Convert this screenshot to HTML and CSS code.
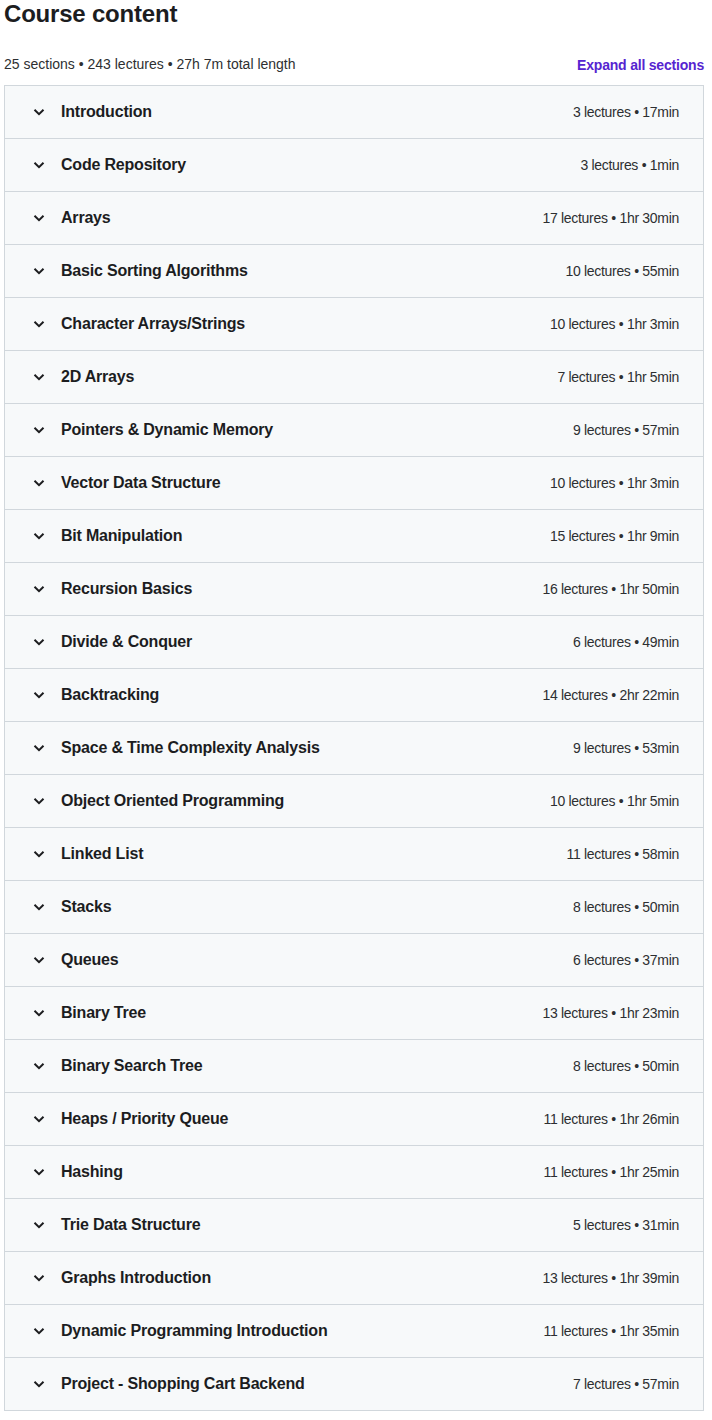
FILE: index.html
```html
<!DOCTYPE html>
<html lang="en">
<head>
    <meta charset="UTF-8">
    <title>Course content</title>
    <link rel="stylesheet" href="styles.css">
</head>
<body>
    <div class="curso">
        <h2>Course content</h2>
        <div class="resumen">
            <span>25 sections • 243 lectures • 27h 7m total length</span>
            <button class="expandir">Expand all sections</button>
        </div>

        <div class="secciones">
            <div class="seccion"><span class="flecha"><svg viewBox="0 0 12 8"><path d="M1.5 1.8 6 6.2 10.5 1.8"/></svg></span><span class="titulo">Introduction</span><span class="info">3 lectures • 17min</span></div>
            <div class="seccion"><span class="flecha"><svg viewBox="0 0 12 8"><path d="M1.5 1.8 6 6.2 10.5 1.8"/></svg></span><span class="titulo">Code Repository</span><span class="info">3 lectures • 1min</span></div>
            <div class="seccion"><span class="flecha"><svg viewBox="0 0 12 8"><path d="M1.5 1.8 6 6.2 10.5 1.8"/></svg></span><span class="titulo">Arrays</span><span class="info">17 lectures • 1hr 30min</span></div>
            <div class="seccion"><span class="flecha"><svg viewBox="0 0 12 8"><path d="M1.5 1.8 6 6.2 10.5 1.8"/></svg></span><span class="titulo">Basic Sorting Algorithms</span><span class="info">10 lectures • 55min</span></div>
            <div class="seccion"><span class="flecha"><svg viewBox="0 0 12 8"><path d="M1.5 1.8 6 6.2 10.5 1.8"/></svg></span><span class="titulo">Character Arrays/Strings</span><span class="info">10 lectures • 1hr 3min</span></div>
            <div class="seccion"><span class="flecha"><svg viewBox="0 0 12 8"><path d="M1.5 1.8 6 6.2 10.5 1.8"/></svg></span><span class="titulo">2D Arrays</span><span class="info">7 lectures • 1hr 5min</span></div>
            <div class="seccion"><span class="flecha"><svg viewBox="0 0 12 8"><path d="M1.5 1.8 6 6.2 10.5 1.8"/></svg></span><span class="titulo">Pointers &amp; Dynamic Memory</span><span class="info">9 lectures • 57min</span></div>
            <div class="seccion"><span class="flecha"><svg viewBox="0 0 12 8"><path d="M1.5 1.8 6 6.2 10.5 1.8"/></svg></span><span class="titulo">Vector Data Structure</span><span class="info">10 lectures • 1hr 3min</span></div>
            <div class="seccion"><span class="flecha"><svg viewBox="0 0 12 8"><path d="M1.5 1.8 6 6.2 10.5 1.8"/></svg></span><span class="titulo">Bit Manipulation</span><span class="info">15 lectures • 1hr 9min</span></div>
            <div class="seccion"><span class="flecha"><svg viewBox="0 0 12 8"><path d="M1.5 1.8 6 6.2 10.5 1.8"/></svg></span><span class="titulo">Recursion Basics</span><span class="info">16 lectures • 1hr 50min</span></div>
            <div class="seccion"><span class="flecha"><svg viewBox="0 0 12 8"><path d="M1.5 1.8 6 6.2 10.5 1.8"/></svg></span><span class="titulo">Divide &amp; Conquer</span><span class="info">6 lectures • 49min</span></div>
            <div class="seccion"><span class="flecha"><svg viewBox="0 0 12 8"><path d="M1.5 1.8 6 6.2 10.5 1.8"/></svg></span><span class="titulo">Backtracking</span><span class="info">14 lectures • 2hr 22min</span></div>
            <div class="seccion"><span class="flecha"><svg viewBox="0 0 12 8"><path d="M1.5 1.8 6 6.2 10.5 1.8"/></svg></span><span class="titulo">Space &amp; Time Complexity Analysis</span><span class="info">9 lectures • 53min</span></div>
            <div class="seccion"><span class="flecha"><svg viewBox="0 0 12 8"><path d="M1.5 1.8 6 6.2 10.5 1.8"/></svg></span><span class="titulo">Object Oriented Programming</span><span class="info">10 lectures • 1hr 5min</span></div>
            <div class="seccion"><span class="flecha"><svg viewBox="0 0 12 8"><path d="M1.5 1.8 6 6.2 10.5 1.8"/></svg></span><span class="titulo">Linked List</span><span class="info">11 lectures • 58min</span></div>
            <div class="seccion"><span class="flecha"><svg viewBox="0 0 12 8"><path d="M1.5 1.8 6 6.2 10.5 1.8"/></svg></span><span class="titulo">Stacks</span><span class="info">8 lectures • 50min</span></div>
            <div class="seccion"><span class="flecha"><svg viewBox="0 0 12 8"><path d="M1.5 1.8 6 6.2 10.5 1.8"/></svg></span><span class="titulo">Queues</span><span class="info">6 lectures • 37min</span></div>
            <div class="seccion"><span class="flecha"><svg viewBox="0 0 12 8"><path d="M1.5 1.8 6 6.2 10.5 1.8"/></svg></span><span class="titulo">Binary Tree</span><span class="info">13 lectures • 1hr 23min</span></div>
            <div class="seccion"><span class="flecha"><svg viewBox="0 0 12 8"><path d="M1.5 1.8 6 6.2 10.5 1.8"/></svg></span><span class="titulo">Binary Search Tree</span><span class="info">8 lectures • 50min</span></div>
            <div class="seccion"><span class="flecha"><svg viewBox="0 0 12 8"><path d="M1.5 1.8 6 6.2 10.5 1.8"/></svg></span><span class="titulo">Heaps / Priority Queue</span><span class="info">11 lectures • 1hr 26min</span></div>
            <div class="seccion"><span class="flecha"><svg viewBox="0 0 12 8"><path d="M1.5 1.8 6 6.2 10.5 1.8"/></svg></span><span class="titulo">Hashing</span><span class="info">11 lectures • 1hr 25min</span></div>
            <div class="seccion"><span class="flecha"><svg viewBox="0 0 12 8"><path d="M1.5 1.8 6 6.2 10.5 1.8"/></svg></span><span class="titulo">Trie Data Structure</span><span class="info">5 lectures • 31min</span></div>
            <div class="seccion"><span class="flecha"><svg viewBox="0 0 12 8"><path d="M1.5 1.8 6 6.2 10.5 1.8"/></svg></span><span class="titulo">Graphs Introduction</span><span class="info">13 lectures • 1hr 39min</span></div>
            <div class="seccion"><span class="flecha"><svg viewBox="0 0 12 8"><path d="M1.5 1.8 6 6.2 10.5 1.8"/></svg></span><span class="titulo">Dynamic Programming Introduction</span><span class="info">11 lectures • 1hr 35min</span></div>
            <div class="seccion"><span class="flecha"><svg viewBox="0 0 12 8"><path d="M1.5 1.8 6 6.2 10.5 1.8"/></svg></span><span class="titulo">Project - Shopping Cart Backend</span><span class="info">7 lectures • 57min</span></div>
        </div>
    </div>
</body>
</html>
```

FILE: styles.css
```css
body {
    margin: 0;
    font-family: "Liberation Sans", Arial, sans-serif;
    color: #2d2f31;
    background-color: #fff;
}
.curso {
    padding: 0 8px 0 4px;
}
h2 {
    margin: 0;
    font-size: 24px;
    line-height: 28px;
    font-weight: 700;
    letter-spacing: -0.2px;
    color: #1c1d1f;
}
.resumen {
    display: flex;
    justify-content: space-between;
    align-items: center;
    margin-top: 25px;
    padding-bottom: 10px;
    font-size: 14px;
    line-height: 22px;
}
.expandir {
    padding: 0;
    margin-top: 2px;
    background: none;
    border: none;
    font-family: inherit;
    font-size: 14px;
    font-weight: 700;
    letter-spacing: -0.2px;
    color: #5624d0;
    cursor: pointer;
}
.secciones {
    border: 1px solid #d1d7dc;
    border-top: none;
}
.seccion {
    display: flex;
    align-items: center;
    height: 51px;
    padding: 0 24px 1px 28px;
    border-top: 1px solid #d1d7dc;
    background-color: #f7f9fa;
}
.flecha {
    display: flex;
    width: 12px;
    margin-right: 16px;
}
.flecha svg {
    width: 12px;
    height: 8px;
    fill: none;
    stroke: #1c1d1f;
    stroke-width: 2;
}
.titulo {
    flex: 1;
    font-size: 16px;
    font-weight: 700;
    letter-spacing: -0.2px;
    color: #1c1d1f;
}
.info {
    font-size: 14px;
    letter-spacing: -0.3px;
    color: #2d2f31;
}
```
